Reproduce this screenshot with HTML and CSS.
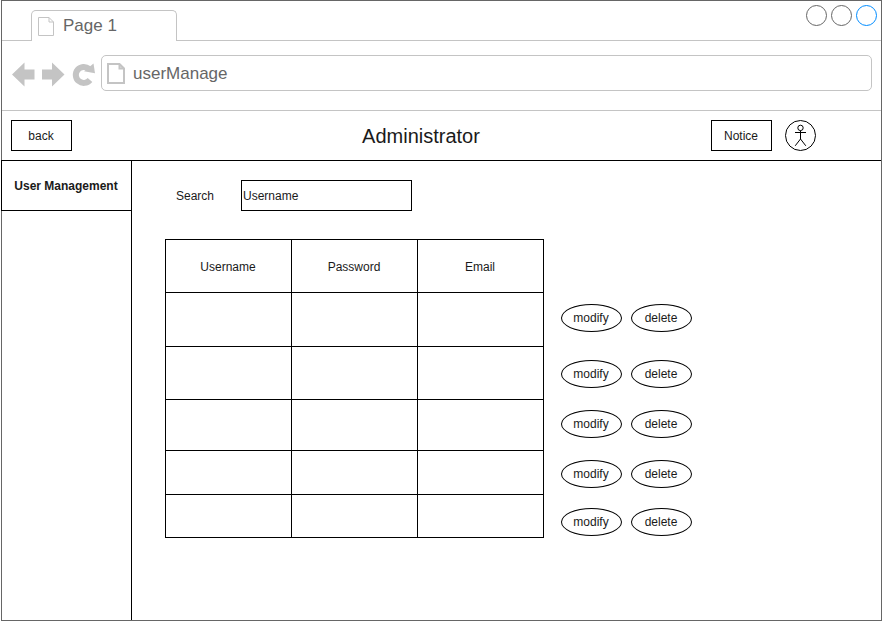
FILE: index.html
```html
<!DOCTYPE html>
<html lang="en">
<head>
<meta charset="utf-8">
<title>Administrator</title>
<link rel="stylesheet" href="styles.css">
</head>
<body>
<div class="window">
  <div class="tabbar">
    <div class="tab">
      <svg class="tab-icon" width="17" height="20" viewBox="0 0 17 20"><path d="M1.500 1.500H12L16.500 6V19.500H1.500ZM12 1.500V6H16.500"/></svg>
      <span>Page 1</span>
    </div>
    <div class="controls"><i class="dot"></i><i class="dot"></i><i class="dot active"></i></div>
  </div>
  <div class="toolbar">
    <svg class="nav" width="88" height="30" viewBox="0 0 88 30">
      <path d="M1 14.500L13.500 2.500V9.500H23.500V19.500H13.500V26.500Z"/>
      <path d="M53.500 14.500L41 2.500V9.500H31V19.500H41V26.500Z"/>
      <path class="reload" d="M79 20A8 8 0 1 1 78 8.800"/>
      <path d="M82.500 3.500L84 13.300L73 11.300Z"/>
    </svg>
    <div class="address">
      <svg class="page-icon" width="18" height="21" viewBox="0 0 18 21"><path d="M1 1H12.500L17 5.500V20H1ZM12.500 1V5.500H17"/></svg>
      <span>userManage</span>
    </div>
  </div>
  <header class="header">
    <button class="box">back</button>
    <h1>Administrator</h1>
    <button class="box">Notice</button>
    <svg class="avatar" width="31" height="31" viewBox="0 0 31 31"><circle cx="15.500" cy="15.500" r="15"/><circle cx="15.500" cy="7.900" r="2.700"/><path d="M15.500 10.600V19M10 12.500H21M15.500 19L10.200 25.800M15.500 19L20.800 25.800"/></svg>
  </header>
  <div class="body">
    <nav class="sidebar"><a>User Management</a></nav>
    <main>
      <div class="search"><label>Search</label><div class="field">Username</div></div>
      <div class="content">
        <table>
          <tr class="r0"><th>Username</th><th>Password</th><th>Email</th></tr>
          <tr class="r1"><td></td><td></td><td></td></tr>
          <tr class="r2"><td></td><td></td><td></td></tr>
          <tr class="r3"><td></td><td></td><td></td></tr>
          <tr class="r4"><td></td><td></td><td></td></tr>
          <tr class="r5"><td></td><td></td><td></td></tr>
        </table>
        <div class="actions">
          <button class="oval">modify</button><button class="oval">delete</button>
          <button class="oval">modify</button><button class="oval">delete</button>
          <button class="oval">modify</button><button class="oval">delete</button>
          <button class="oval">modify</button><button class="oval">delete</button>
          <button class="oval">modify</button><button class="oval">delete</button>
        </div>
      </div>
    </main>
  </div>
</div>
</body>
</html>
```
FILE: styles.css
```css
* { box-sizing: border-box; }
body { margin: 0; background: #fff; color: #1a1a1a; font: 12px/14px "Liberation Sans", Arial, sans-serif; overflow: hidden; }
svg { display: block; flex: none; fill: none; stroke: #c4c4c4; }
button { font: inherit; color: inherit; background: #fff; padding: 0; margin: 0; }
.window { width: 881px; height: 621px; margin-left: 1px; border: 1px solid #666; display: flex; flex-direction: column; }
.tabbar { height: 40px; flex: none; border-bottom: 1px solid #c4c4c4; display: flex; justify-content: space-between; padding: 4px 4px 0 29px; }
.tab { width: 146px; height: 31px; margin-top: 5px; background: #fff; border: 1px solid #c4c4c4; border-bottom: 0; border-radius: 5px 5px 0 0; display: flex; align-items: center; padding-left: 5px; gap: 9px; color: #666; font-size: 17px; line-height: 20px; }
.controls { display: flex; gap: 4px; }
.dot { width: 21px; height: 21px; border: 1px solid #666; border-radius: 50%; }
.dot.active { border-color: #008cff; }
.toolbar { height: 70px; flex: none; border-bottom: 1px solid #c4c4c4; display: flex; padding: 14px 9px 0 9px; }
.nav { margin-top: 5px; margin-right: 2px; }
.nav path { fill: #c4c4c4; stroke: none; }
.nav .reload { fill: none; stroke: #c4c4c4; stroke-width: 6; }
.address { flex: 1; height: 36px; border: 1px solid #c4c4c4; border-radius: 5px; display: flex; align-items: center; padding-left: 5px; gap: 8px; color: #666; font-size: 17px; line-height: 20px; }
.address span { padding-top: 2px; }
.page-icon { stroke-width: 2; }
.header { height: 50px; flex: none; border-bottom: 1px solid #000; margin-left: -1px; display: flex; align-items: center; padding: 0 65px 1px 10px; }
.box { width: 61px; height: 31px; border: 1px solid #000; padding: 1px 1px 0 0; }
.header h1 { flex: 1; margin: 0; text-align: center; font-size: 20px; line-height: 24px; font-weight: 400; padding: 2px 0 0 59px; }
.avatar { margin-left: 13px; stroke: #000; }
.body { flex: 1; min-height: 0; display: flex; margin-left: -1px; }
.sidebar { width: 131px; border-right: 1px solid #000; }
.sidebar a { display: flex; align-items: center; justify-content: center; height: 50px; border-left: 1px solid #000; border-bottom: 1px solid #000; font-weight: 700; padding-right: 1px; }
main { flex: 1; padding: 19px 0 0 33px; }
.search { display: flex; align-items: center; padding-left: 11px; }
.search label { width: 65px; }
.field { width: 171px; height: 31px; border: 1px solid #000; padding: 8px 1px; }
.content { display: flex; margin-top: 28px; gap: 17px; }
table { width: 379px; border-collapse: collapse; table-layout: fixed; }
th, td { border: 1px solid #000; padding: 0; font-weight: 400; text-align: center; }
th { padding: 2px 1px 0 0; }
.r0 { height: 53px; }
.r1 { height: 54px; }
.r2 { height: 53px; }
.r3 { height: 51px; }
.r4 { height: 44px; }
.r5 { height: 43px; }
.actions { display: grid; grid-template-columns: 61px 61px; grid-template-rows: 56px 50px 50px 48px 28px; column-gap: 9px; margin-top: 65px; }
.oval { height: 28px; border: 1px solid #000; border-radius: 50%; padding-right: 1px; }
```
